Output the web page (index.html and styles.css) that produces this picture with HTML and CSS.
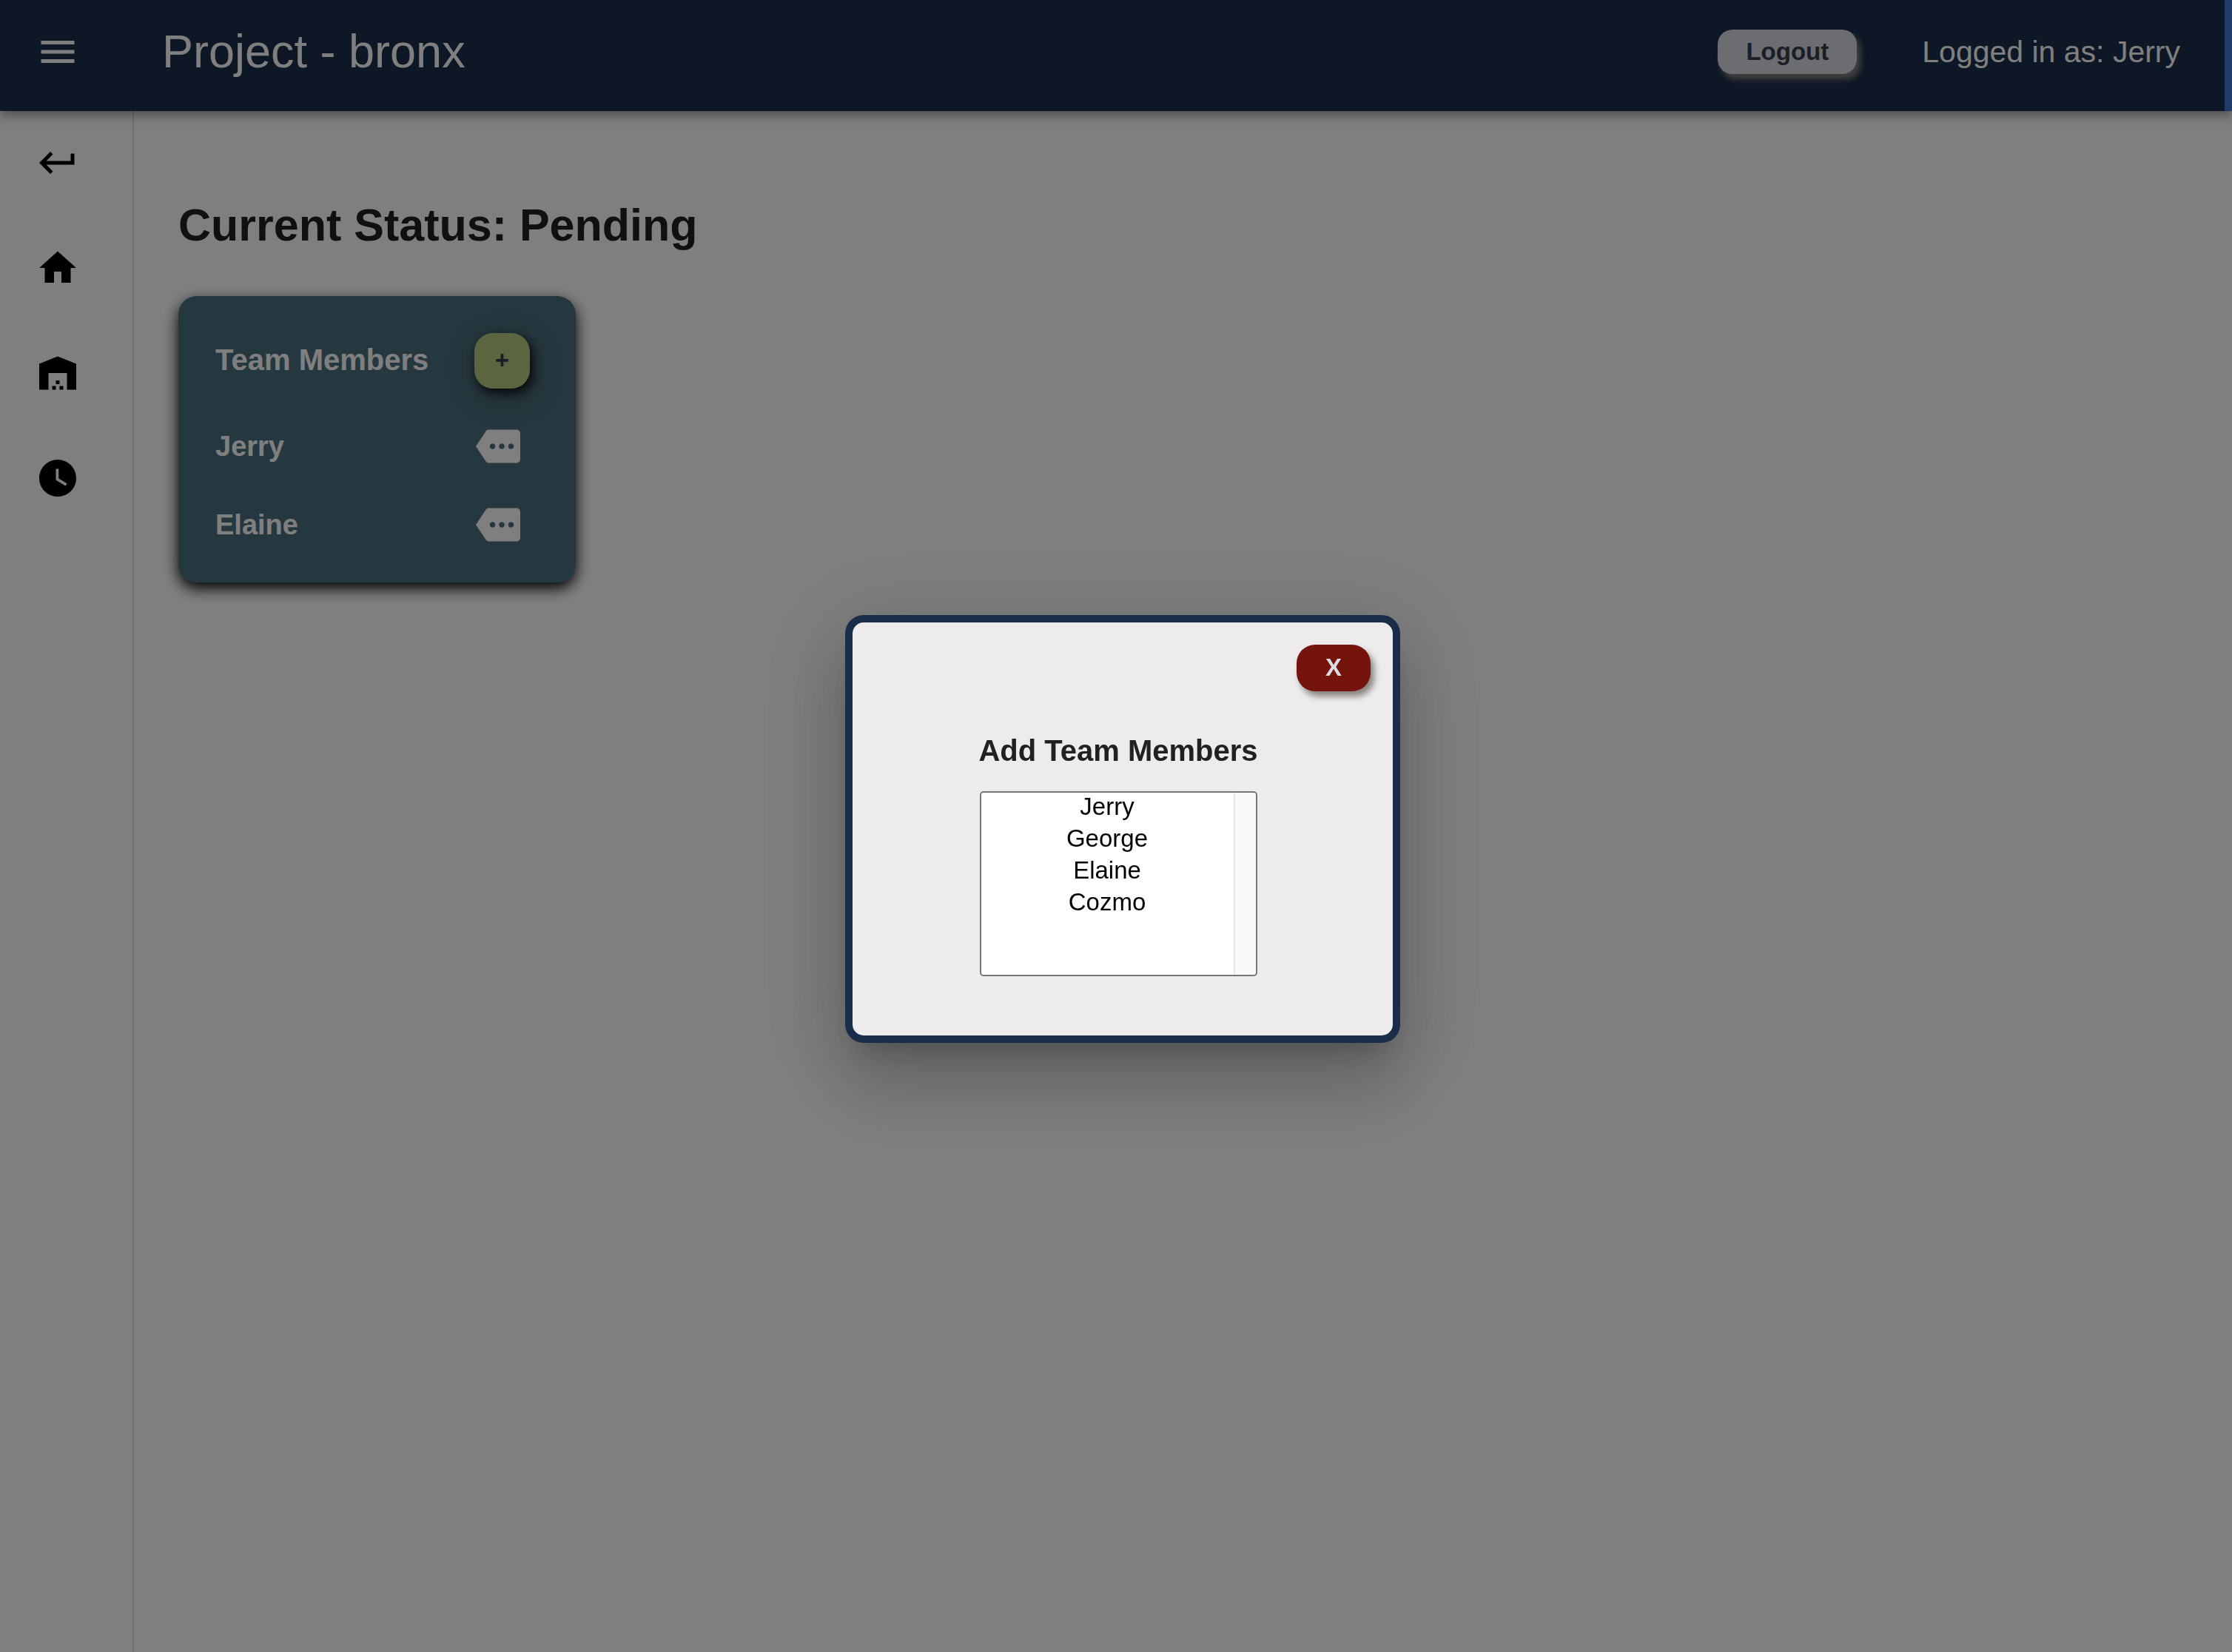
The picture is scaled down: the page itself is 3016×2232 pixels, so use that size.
FILE: index.html
```html
<!DOCTYPE html>
<html lang="en">
<head>
<meta charset="utf-8">
<title>Project - bronx</title>
<link rel="stylesheet" href="styles.css">
</head>
<body>
<div class="app">
  <header class="appbar">
    <button class="icon-button menu-button" type="button" aria-label="Open menu">
      <svg class="icon" viewBox="0 0 24 24" aria-hidden="true"><path d="M3 18h18v-2H3v2zm0-5h18v-2H3v2zm0-7v2h18V6H3z"/></svg>
    </button>
    <h1 class="appbar-title">Project - bronx</h1>
    <button class="button logout" type="button">Logout</button>
    <p class="user">Logged in as: Jerry</p>
  </header>
  <div class="body">
    <nav class="sidebar" aria-label="Main">
      <a class="nav-link" href="#back" aria-label="Back"><svg class="icon" viewBox="0 0 24 24" aria-hidden="true"><path d="M19 7v4H5.83l3.58-3.59L8 6l-6 6 6 6 1.41-1.41L5.83 13H21V7z"/></svg></a>
      <a class="nav-link" href="#home" aria-label="Home"><svg class="icon" viewBox="0 0 24 24" aria-hidden="true"><path d="M10 20v-6h4v6h5v-8h3L12 3 2 12h3v8z"/></svg></a>
      <a class="nav-link" href="#warehouse" aria-label="Warehouse"><svg class="icon" viewBox="0 0 24 24" aria-hidden="true"><path d="M22 21V7L12 3 2 7v14h5v-9h10v9h5zm-11-2H9v2h2v-2zm2-3h-2v2h2v-2zm2 3h-2v2h2v-2z"/></svg></a>
      <a class="nav-link" href="#hours" aria-label="Hours"><svg class="icon" viewBox="0 0 24 24" aria-hidden="true"><path d="M12 2C6.5 2 2 6.500 2 12s4.500 10 10 10 10-4.500 10-10S17.500 2 12 2zm4.200 14.200L11 13V7h1.500v5.200l4.500 2.700-.8 1.300z"/></svg></a>
    </nav>
    <main class="content">
      <h2 class="status">Current Status: Pending</h2>
      <section class="card">
        <div class="card-head">
          <h3 class="card-title">Team Members</h3>
          <button class="button add" type="button" aria-label="Add team member">+</button>
        </div>
        <ul class="members">
          <li class="member">
            <span>Jerry</span>
            <button class="icon-button" type="button" aria-label="More about Jerry"><svg class="icon" viewBox="0 0 24 24" aria-hidden="true"><path d="M22 3H7c-.69 0-1.230.35-1.590.88L0 12l5.410 8.110c.36.53.97.89 1.660.89H22c1.100 0 2-.9 2-2V5c0-1.100-.9-2-2-2zM9 13.500c-.83 0-1.500-.67-1.500-1.500s.67-1.500 1.500-1.500 1.500.67 1.500 1.500-.67 1.500-1.500 1.500zm5 0c-.83 0-1.500-.67-1.500-1.500s.67-1.500 1.500-1.500 1.500.67 1.500 1.500-.67 1.500-1.500 1.500zm5 0c-.83 0-1.500-.67-1.500-1.500s.67-1.500 1.500-1.500 1.500.67 1.500 1.500-.67 1.500-1.500 1.500z"/></svg></button>
          </li>
          <li class="member">
            <span>Elaine</span>
            <button class="icon-button" type="button" aria-label="More about Elaine"><svg class="icon" viewBox="0 0 24 24" aria-hidden="true"><path d="M22 3H7c-.69 0-1.230.35-1.590.88L0 12l5.410 8.110c.36.53.97.89 1.660.89H22c1.100 0 2-.9 2-2V5c0-1.100-.9-2-2-2zM9 13.500c-.83 0-1.500-.67-1.500-1.500s.67-1.500 1.500-1.500 1.500.67 1.500 1.500-.67 1.500-1.500 1.500zm5 0c-.83 0-1.500-.67-1.500-1.500s.67-1.500 1.500-1.500 1.500.67 1.500 1.500-.67 1.500-1.500 1.500zm5 0c-.83 0-1.500-.67-1.500-1.500s.67-1.500 1.500-1.500 1.500.67 1.500 1.500-.67 1.500-1.500 1.500z"/></svg></button>
          </li>
        </ul>
      </section>
    </main>
  </div>
</div>
<div class="backdrop">
  <div class="dialog" role="dialog" aria-modal="true">
    <button class="button close" type="button" aria-label="Close">X</button>
    <label class="dialog-title" for="team">Add Team Members</label>
    <select class="picker" id="team" multiple>
      <option>Jerry</option>
      <option>George</option>
      <option>Elaine</option>
      <option>Cozmo</option>
    </select>
  </div>
</div>
</body>
</html>
```

FILE: styles.css
```css
* {
  box-sizing: border-box;
}

body {
  margin: 0;
  background: #fff;
  color: #212121;
  font-family: "Liberation Sans", Arial, Helvetica, sans-serif;
}

h1, h2, h3, p, ul {
  margin: 0;
  padding: 0;
}

.app {
  display: flex;
  flex-direction: column;
  min-height: 100vh;
}

.icon {
  display: block;
  width: 60px;
  height: 60px;
  fill: currentColor;
}

.icon-button {
  padding: 0;
  border: 0;
  background: none;
  color: inherit;
}

.button {
  border: 0;
  padding: 0 0 2px;
  font-family: inherit;
  font-size: 33px;
  font-weight: 700;
  box-shadow: 5px 7px 8px #888580;
}

/* App bar */
.appbar {
  position: relative;
  display: flex;
  align-items: center;
  height: 150px;
  padding: 0 60px 10px 48px;
  border-right: 10px solid #3c76d2;
  background: #1a2e4a;
  color: #fff;
  box-shadow: 0 5px 10px -2px rgba(0, 0, 0, 0.2), 0 10px 12px rgba(0, 0, 0, 0.14), 0 2px 25px rgba(0, 0, 0, 0.12);
}

.appbar-title {
  flex: 1;
  margin-left: 111px;
  padding-bottom: 2px;
  font-size: 63px;
  font-weight: 400;
  line-height: 80px;
}

.logout {
  width: 188px;
  height: 60px;
  padding-bottom: 0;
  border-radius: 20px;
  background: #d8dae2;
  color: #3a3a4a;
}

.user {
  margin-left: 88px;
  font-size: 41px;
  line-height: 60px;
}

/* Side navigation */
.body {
  display: flex;
  flex: 1;
}

.sidebar {
  display: flex;
  flex-direction: column;
  gap: 82px;
  width: 181px;
  padding: 40px 48px;
  border-right: 2px solid #e0e0e0;
}

.nav-link {
  color: #000;
}

/* Page content */
.content {
  flex: 1;
  padding: 114px 60px;
}

.status {
  font-size: 61px;
  line-height: 80px;
}

.card {
  width: 537px;
  margin-top: 56px;
  padding: 50px 62px 48px 50px;
  border-radius: 25px;
  background: #4c707e;
  color: #fff;
  box-shadow: 0 8px 20px #000;
}

.card-head {
  display: flex;
  align-items: center;
  justify-content: space-between;
}

.card-title {
  padding-bottom: 2px;
  font-size: 40px;
}

.add {
  width: 75px;
  height: 75px;
  border-radius: 25px;
  background: #b6cc80;
  color: #36384f;
  box-shadow: 4px 6px 14px rgba(0, 0, 0, 0.8), 4px 10px 40px rgba(0, 0, 0, 0.3);
}

.members {
  display: flex;
  flex-direction: column;
  gap: 46px;
  padding: 48px 13px 0 0;
  list-style: none;
}

.member {
  display: flex;
  align-items: center;
  justify-content: space-between;
  font-size: 38px;
  font-weight: 700;
}

/* Dialog */
.backdrop {
  position: fixed;
  inset: 0;
  display: flex;
  align-items: center;
  justify-content: center;
  padding: 8px 0 0 18px;
  background: rgba(0, 0, 0, 0.5);
}

.dialog {
  display: flex;
  flex-direction: column;
  align-items: center;
  width: 750px;
  padding: 30px 30px 80px 18px;
  border: 10px solid #192d48;
  border-radius: 25px;
  background: #edebec;
  box-shadow: 0 28px 38px -18px rgba(0, 0, 0, 0.2), 0 60px 95px 8px rgba(0, 0, 0, 0.14), 0 22px 115px 20px rgba(0, 0, 0, 0.12);
}

.close {
  align-self: flex-end;
  width: 100px;
  height: 63px;
  border-radius: 25px;
  background: #74140d;
  color: #dcdce6;
}

.dialog-title {
  margin-top: 50px;
  font-size: 40px;
  font-weight: 700;
  line-height: 60px;
}

.picker {
  width: 375px;
  height: 250px;
  margin-top: 25px;
  padding: 0 30px 0 0;
  overflow: hidden;
  border: 2px solid #767676;
  border-radius: 5px;
  outline: 0;
  background: linear-gradient(to right, #e8e8e8 2px, #fafafa 2px) right / 30px 100% no-repeat #fff;
  color: #000;
  font-family: inherit;
  font-size: 33px;
  text-align: center;
}

.picker option {
  min-height: 0;
  padding: 0 0 5px;
}
```
